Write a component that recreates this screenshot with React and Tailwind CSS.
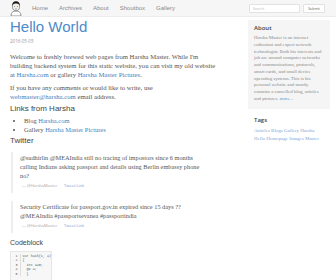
import React from 'react';

const navLinks = ['Home', 'Archives', 'About', 'Shoutbox', 'Gallery'];

const tweets = [
    {
        lines: [
            '@sudhirlin @MEAIndia still no tracing of impostors since 6 months',
            'calling Indians asking passport and details using Berlin embassy phone',
            'no?',
        ],
    },
    {
        lines: [
            'Security Certificate for passport.gov.in expired since 15 days ??',
            '@MEAIndia #passportsevanea #passportindia',
        ],
    },
];

const codeLines = ['var hash(s, a)', '{', '  int a=0;', '  go =;', '  }'];

function Avatar() {
    return (
        <svg width="12" height="16" viewBox="0 0 12 16">
            <path d="M1 16 Q1 11 6 11 Q11 11 11 16 Z" fill="#ffffff" stroke="#555" strokeWidth="0.6" />
            <ellipse cx="6" cy="6.5" rx="3.6" ry="4.2" fill="#f4efe8" stroke="#444" strokeWidth="0.5" />
            <path d="M2.2 6 Q2 1.2 6 1.2 Q10 1.2 9.8 6 Q9 3.4 6 3.6 Q3 3.4 2.2 6 Z" fill="#1c1c1c" />
            <circle cx="4.7" cy="6.6" r="0.45" fill="#222" />
            <circle cx="7.3" cy="6.6" r="0.45" fill="#222" />
            <path d="M5 8.8 Q6 9.4 7 8.8" stroke="#333" strokeWidth="0.4" fill="none" />
        </svg>
    );
}

export default function App() {
    return (
        <div className="w-[336px] h-[280px] overflow-hidden bg-white font-['Open_Sans',sans-serif]">
            {/* Navbar */}
            <div className="h-[17px] bg-[#f6f6f6] border-b border-[#ececec] flex items-center">
                <div className="ml-[10px] w-[12px] h-[16px] self-start">
                    <Avatar />
                </div>
                <div className="flex ml-[10px] gap-[11px] text-[6px] leading-[8px] text-[#8a8a8a] font-['Liberation_Sans',sans-serif]">
                    {navLinks.map(link => (
                        <span key={link}>{link}</span>
                    ))}
                </div>
                <div className="ml-auto mr-[11px] flex gap-[3px] items-center">
                    <div className="w-[51px] h-[9px] bg-white border border-[#e2e2e2] rounded-[1px] text-[3.5px] leading-[7px] pl-[3px] text-[#b8b8b8]">
                        Search
                    </div>
                    <div className="w-[22px] h-[9px] bg-white border border-[#e2e2e2] rounded-[1px] text-[3.5px] leading-[7px] text-center text-[#666]">
                        Submit
                    </div>
                </div>
            </div>

            <div className="flex">
                {/* Main column */}
                <div className="w-[216px] shrink-0 pl-[10px]">
                    <h1 className="mt-[2px] text-[15px] leading-[16px] text-[#4d8ac7] font-['Liberation_Sans',sans-serif]">Hello World</h1>
                    <div className="mt-[3px] text-[4.5px] leading-[6px] text-[#9a9a9a]">2016-05-05</div>

                    <div className="font-['Liberation_Serif',serif] text-[6.7px] leading-[9px] text-[#555]">
                        <p className="mt-[8px]">
                            Welcome to freshly brewed web pages from Harsha Master. While I'm building backend system for this static website, you can visit my old website at <span className="text-[#3f7fc0]">Harsha.com</span> or gallery <span className="text-[#3f7fc0]">Harsha Master Pictures</span>.
                        </p>
                        <p className="mt-[4px]">
                            If you have any comments or would like to write, use <span className="text-[#3f7fc0]">webmaster@harsha.com</span> email address.
                        </p>
                    </div>

                    <h2 className="mt-[3px] text-[8px] leading-[10px] text-[#444] font-['Liberation_Sans',sans-serif]">Links from Harsha</h2>
                    <ul className="mt-[2px] font-['Liberation_Serif',serif] text-[6.5px] leading-[9px] text-[#555] list-disc pl-[14px]">
                        <li>Blog <span className="text-[#3f7fc0]">Harsha.com</span></li>
                        <li>Gallery <span className="text-[#3f7fc0]">Harsha Master Pictures</span></li>
                    </ul>

                    <h2 className="mt-[2px] text-[8px] leading-[10px] text-[#444] font-['Liberation_Sans',sans-serif]">Twitter</h2>

                    {tweets.map((tweet, i) => (
                        <div key={i} className={`${i === 0 ? 'mt-[6px]' : 'mt-[8px]'} border-l-[2px] border-[#eeeeee] pl-[7px] ml-[1px] pb-[4px]`}>
                            <div className="font-['Liberation_Serif',serif] text-[6.3px] leading-[9px] text-[#555] pt-[1px] whitespace-nowrap">
                                {tweet.lines.map((line, j) => (
                                    <div key={j}>{line}</div>
                                ))}
                            </div>
                            <div className="mt-[3px] text-[4px] leading-[6px] text-[#a0a0a0] pl-[2px]">
                                — @HarshaMaster <span className="ml-[6px] text-[#6f9fd4]">Tweet Link</span>
                            </div>
                        </div>
                    ))}

                    <h2 className="mt-[5px] text-[7px] leading-[10px] text-[#444] font-['Liberation_Sans',sans-serif]">Codeblock</h2>
                    <div className="mt-[3px] w-[42px] bg-[#f7f7f7] border border-[#e6e6e6] flex pt-[2px] pb-[4px] font-['Liberation_Mono',monospace] text-[3.4px] leading-[4.4px] text-[#555]">
                        <div className="w-[10px] text-right pr-[2px] border-r border-[#dddddd]">
                            {codeLines.map((_, i) => (
                                <div key={i}>{i + 1}</div>
                            ))}
                        </div>
                        <div className="pl-[2px] whitespace-pre">
                            {codeLines.map((line, i) => (
                                <div key={i}>{line}</div>
                            ))}
                        </div>
                    </div>
                </div>

                {/* Sidebar */}
                <div className="ml-[32px] w-[82px] shrink-0">
                    <div className="mt-[3px] bg-[#f5f5f5] pl-[6px] pr-[8px] pt-[4px] pb-[6px]">
                        <h3 className="text-[6px] leading-[8px] font-semibold text-[#444]">About</h3>
                        <p className="mt-[3px] font-['Liberation_Serif',serif] text-[4.8px] leading-[6.75px] text-[#8a8a8a]">
                            Harsha Master is an internet enthusiast and expert network technologist. Both his interests and job are around computer networks and communications, protocols, smart cards, and small device operating systems. This is his personal website and mostly contains a cancelled blog, articles and pictures. <span className="text-[#5b93cf]">more...</span>
                        </p>
                    </div>
                    <h3 className="mt-[7px] ml-[6px] text-[6px] leading-[8px] font-semibold text-[#444]">Tags</h3>
                    <p className="mt-[3px] ml-[6px] font-['Liberation_Serif',serif] text-[5px] leading-[8px] text-[#7aa6d8] pr-[10px]">
                        Articles Blogs Gallery Harsha Hello Homepage Images Master
                    </p>
                </div>
            </div>
        </div>
    );
}
